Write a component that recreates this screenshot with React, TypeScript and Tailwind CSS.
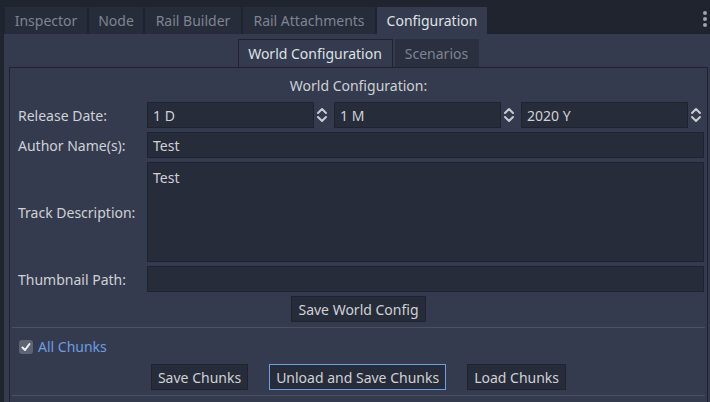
import { ReactNode } from "react";

const FONT = { fontFamily: '"Noto Sans", "Open Sans", sans-serif' };

function SpinArrows() {
  return (
    <div className="w-[16px] h-[26px] flex items-center justify-center">
      <svg width="12" height="18" viewBox="0 0 12 18" fill="none">
        <path d="M2 7 L6 3 L10 7" stroke="#c9ccd3" strokeWidth="2" strokeLinecap="round" strokeLinejoin="round" />
        <path d="M2 11 L6 15 L10 11" stroke="#c9ccd3" strokeWidth="2" strokeLinecap="round" strokeLinejoin="round" />
      </svg>
    </div>
  );
}

function SpinBox({ value }: { value: string }) {
  return (
    <div className="flex w-[183px]">
      <div className="w-[167px] h-[26px] bg-[#272c3a] border border-[#1f2330] px-[5px] flex items-center">
        {value}
      </div>
      <SpinArrows />
    </div>
  );
}

function Row({ label, children, tall }: { label: string; children: ReactNode; tall?: boolean }) {
  return (
    <div className={`flex ${tall ? "h-[100px]" : "h-[26px]"}`}>
      <div className="w-[135px] pl-[6px] flex items-center shrink-0">{label}</div>
      {children}
    </div>
  );
}

function Field({ value, tall }: { value?: string; tall?: boolean }) {
  return (
    <div
      className={`w-[557px] bg-[#272c3a] border border-[#1f2330] px-[5px] flex ${
        tall ? "h-[100px] items-start pt-[4px]" : "h-[26px] items-center"
      }`}
    >
      {value}
    </div>
  );
}

function Btn({ children, focused }: { children: ReactNode; focused?: boolean }) {
  return (
    <div
      className={`h-[26px] px-[6px] flex items-center bg-[#272c3a] border ${
        focused ? "border-[#6b9ee4]" : "border-[#1f2330]"
      }`}
    >
      {children}
    </div>
  );
}

function Separator() {
  return (
    <div className="h-[3px] flex items-center">
      <div className="w-full h-px bg-[#4a5162]" />
    </div>
  );
}

export default function App() {
  const tabs = [
    { name: "Inspector", w: "w-[82px]" },
    { name: "Node", w: "w-[54px]" },
    { name: "Rail Builder", w: "w-[96px]" },
    { name: "Rail Attachments", w: "w-[132px]" },
  ];

  return (
    <div style={FONT} className="w-[710px] h-[402px] overflow-hidden bg-[#20242e] text-[14px] text-[#cfd1d6] relative">
      {/* tab bar */}
      <div className="flex gap-[2px] pl-[5px] pt-[7px] h-[34px]">
        {tabs.map((t) => (
          <div key={t.name} className={`${t.w} h-[27px] bg-[#272c3a] text-[#7f8491] flex items-center justify-center`}>
            {t.name}
          </div>
        ))}
        <div className="w-[110px] h-[27px] bg-[#343b4e] text-[#dfe1e5] flex items-center justify-center">
          Configuration
        </div>
      </div>
      <div className="absolute left-[703px] top-[11px] flex flex-col gap-[2px]">
        <div className="w-[4px] h-[4px] rounded-full bg-[#9da2ac]" />
        <div className="w-[4px] h-[4px] rounded-full bg-[#9da2ac]" />
        <div className="w-[4px] h-[4px] rounded-full bg-[#9da2ac]" />
      </div>

      {/* main panel */}
      <div className="ml-[4px] w-[708px] h-[368px] bg-[#343b4e] pt-[5px]">
        <div className="flex justify-center gap-[2px]">
          <div className="w-[155px] h-[28px] bg-[#343b4e] border border-b-0 border-[#1f2330] text-[#dfe1e5] flex items-center justify-center">
            World Configuration
          </div>
          <div className="w-[84px] h-[28px] bg-[#2a3040] text-[#7f8491] flex items-center justify-center">
            Scenarios
          </div>
        </div>

        {/* inner panel */}
        <div className="ml-[5px] w-[699px] h-[400px] border border-[#1f2330] bg-[#343b4e] pt-[4px] pl-[2px]">
          <div className="w-[693px] flex flex-col gap-[4px]">
            <div className="h-[26px] flex items-center justify-center">World Configuration:</div>
            <Row label="Release Date:">
              <div className="flex gap-[4px]">
                <SpinBox value="1 D" />
                <SpinBox value="1 M" />
                <SpinBox value="2020 Y" />
              </div>
            </Row>
            <Row label="Author Name(s):">
              <Field value="Test" />
            </Row>
            <Row label="Track Description:" tall>
              <Field value="Test" tall />
            </Row>
            <Row label="Thumbnail Path:">
              <Field />
            </Row>
            <div className="flex justify-center">
              <Btn>Save World Config</Btn>
            </div>
            <Separator />
            <div className="h-[27px] flex items-center pl-[7px] gap-[5px]">
              <div className="w-[14px] h-[14px] rounded-[3px] bg-[#5d6473] flex items-center justify-center">
                <svg width="10" height="10" viewBox="0 0 10 10" fill="none">
                  <path d="M1.5 5.5 L4 8 L8.5 2" stroke="#f2f3f5" strokeWidth="2" strokeLinecap="round" strokeLinejoin="round" />
                </svg>
              </div>
              <span className="text-[#6d9de3]">All Chunks</span>
            </div>
            <div className="flex justify-center gap-[21px]">
              <Btn>Save Chunks</Btn>
              <Btn focused>Unload and Save Chunks</Btn>
              <Btn>Load Chunks</Btn>
            </div>
            <Separator />
          </div>
        </div>
      </div>
    </div>
  );
}
